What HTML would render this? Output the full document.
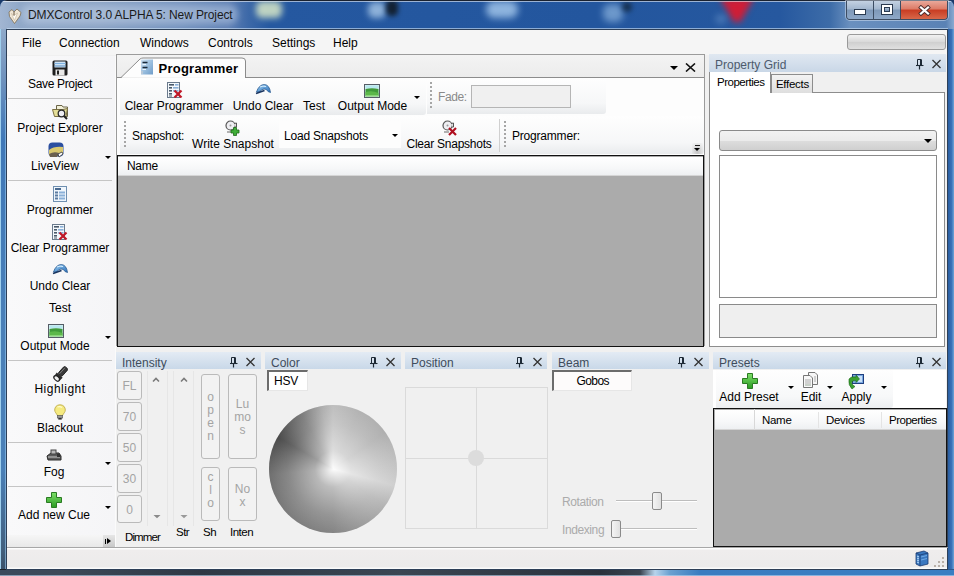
<!DOCTYPE html>
<html><head><meta charset="utf-8">
<style>
*{margin:0;padding:0;box-sizing:border-box}
html,body{width:954px;height:576px;overflow:hidden;background:#1a3a6a}
body{font-family:"Liberation Sans",sans-serif;font-size:12px;color:#000;position:relative}
.a{position:absolute}
.t{position:absolute;white-space:nowrap;line-height:14px}
.lb{text-align:center;letter-spacing:0px}
.sep{position:absolute;height:1px;background:#c5c5c5}
.dd{position:absolute;width:0;height:0;border-left:3px solid transparent;border-right:3px solid transparent;border-top:3px solid #000}
.hdr{position:absolute;height:17px;background:linear-gradient(#e3ebf4,#c9d8e8);}
.hdr .ht{position:absolute;left:6px;top:4px;font-size:12px;color:#3f4c5c;white-space:nowrap;line-height:14px}
.pin{position:absolute;top:4px;width:7px;height:10px}
.xx{position:absolute;top:3px;width:11px;height:11px}
.btnw{position:absolute;border:1px solid #bababa;border-radius:3px;background:#f2f2f2;color:#a4a4a4;font-size:12px;text-align:center}
</style></head><body>
<!-- window frame -->
<div class="a" style="left:0;top:0;width:954px;height:576px;background:#2a62a6;border-radius:7px 7px 0 0;overflow:hidden">
 <div class="a" style="left:0;top:0;width:954px;height:30px;background:linear-gradient(90deg,#a2b6d2 0px,#90a8c8 20px,#8aa2c4 100px,#7492be 180px,#5f80b4 228px,#3d69a8 248px,#2558a0 270px,#23569e 600px,#26589f 780px,#3d6ca8 830px,#6a90bf 850px,#5a82b5 946px,#8aaad0 954px)"></div>
 <div class="a" style="left:0;top:29px;width:7px;height:541px;background:linear-gradient(#8fa9c9 0,#6f92bd 50px,#3f78b8 110px,#4a80b8 300px,#4a80b8 440px,#42607e 520px,#3a5068 541px)"></div>
 <div class="a" style="left:5px;top:100px;width:1px;height:469px;background:rgba(150,200,240,.6)"></div>
 <div class="a" style="left:0;top:29px;width:1px;height:547px;background:#9fd0ee"></div>
 <div class="a" style="left:948px;top:29px;width:6px;height:547px;background:linear-gradient(90deg,#2a5ea0,#3a72b8 60%,#6fa6d8)"></div>
 <div class="a" style="left:0;top:569px;width:954px;height:7px;background:linear-gradient(90deg,#3a4a5c 0px,#3c4a58 60px,#2e3844 200px,#3a4652 400px,#2a323c 600px,#3a4450 640px,#b8d4ec 655px,#6aa0d0 670px,#3a7cc0 700px,#3a7ec2 954px)"></div>
 <div class="a" style="left:0;top:569px;width:954px;height:1px;background:linear-gradient(90deg,#1a2028 0,#1a2028 640px,#244a70 680px,#2a5a90 954px)"></div>
 <div class="a" style="left:0;top:575px;width:954px;height:1px;background:rgba(190,215,240,.6)"></div>
 <div class="a" style="left:256px;top:1px;width:26px;height:17px;border-radius:6px;background:#d8e8c8;filter:blur(3px);opacity:.85"></div>
 <div class="a" style="left:368px;top:2px;width:18px;height:16px;border-radius:6px;background:#a8c8e8;filter:blur(3px);opacity:.8"></div>
 <div class="a" style="left:386px;top:0px;width:12px;height:16px;border-radius:5px;background:#101820;filter:blur(2.5px);opacity:.85"></div>
 <div class="a" style="left:486px;top:1px;width:32px;height:17px;border-radius:8px;background:#a8cbee;filter:blur(3.5px);opacity:.8"></div>
 <div class="a" style="left:603px;top:4px;width:20px;height:18px;border-radius:7px;background:#8cb4de;filter:blur(3.5px);opacity:.7"></div>
 <div class="a" style="left:622px;top:2px;width:10px;height:10px;border-radius:5px;background:#102030;filter:blur(2.5px);opacity:.7"></div>
 <div class="a" style="left:715px;top:-4px;width:44px;height:34px;filter:blur(3px)"><div class="a" style="left:5px;top:2px;width:34px;height:24px;background:#d81a30;clip-path:polygon(0 0,100% 0,60% 100%,40% 100%);opacity:.95"></div></div>
 <div class="a" style="left:715px;top:14px;width:12px;height:10px;border-radius:5px;background:#5a86c0;filter:blur(3px);opacity:.6"></div>
 <div class="a" style="left:0;top:0;width:954px;height:1px;background:#1a2230"></div>
 <div class="a" style="left:1px;top:1px;width:952px;height:1px;background:rgba(255,255,255,.55)"></div>
 <div class="a" style="left:7px;top:28px;width:941px;height:1px;background:rgba(210,230,250,.6)"></div>
</div>
<!-- title glow -->
<div class="a" style="left:22px;top:5px;width:216px;height:19px;border-radius:8px;background:rgba(200,214,234,.45);filter:blur(3px)"></div>
<svg class="a" style="left:8px;top:8px" width="14" height="16" viewBox="0 0 14 16"><path d="M1 4 L4 1.5 L6 4 L9 1 L13 4.5 L12 8 L6.5 15.5 L1.5 8.5Z" fill="#efe6d6" stroke="#7c6c52" stroke-width=".8"/><path d="M3.5 5.5 L6 7.5 L9.5 5 L6.5 12.5Z" fill="#fffdf8" stroke="#b8a888" stroke-width=".5"/><path d="M6 4 L6 7.5" stroke="#5a4a38" stroke-width=".9"/></svg>
<div class="t" style="left:28px;top:8px;font-size:12px;color:#1a1a1a;letter-spacing:-0.1px">DMXControl 3.0 ALPHA 5: New Project</div>
<!-- caption buttons -->
<div class="a" style="left:845px;top:0px;width:104px;height:21px;border-radius:0 0 5px 5px;background:rgba(230,240,250,.45)"></div>
<div class="a" style="left:846px;top:1px;width:102px;height:19px;border:1px solid #3c4c62;border-top:none;border-radius:0 0 4px 4px;overflow:hidden;background:#5a7ba3">
  <div class="a" style="left:0;top:0;width:26px;height:18px;background:linear-gradient(#c4d2e2,#a2b6ce 45%,#7e98b8 50%,#8ea8c8)"></div>
  <div class="a" style="left:26px;top:0;width:1px;height:18px;background:#3c4c62"></div>
  <div class="a" style="left:27px;top:0;width:26px;height:18px;background:linear-gradient(#c4d2e2,#a2b6ce 45%,#7e98b8 50%,#8ea8c8)"></div>
  <div class="a" style="left:53px;top:0;width:1px;height:18px;background:#3c4c62"></div>
  <div class="a" style="left:54px;top:0;width:48px;height:18px;background:linear-gradient(#eaa89a,#dc7a66 45%,#c83c22 50%,#d8684a)"></div>
</div>
<div class="a" style="left:855px;top:10px;width:10px;height:4px;background:#fff;outline:1px solid #2a3a50"></div>
<div class="a" style="left:882px;top:5px;width:10px;height:9px;border:2px solid #fff;outline:1px solid #2a3a50;box-shadow:inset 0 0 0 1px #2a3a50"></div>
<svg class="a" style="left:918px;top:5px" width="13" height="11" viewBox="0 0 13 11"><path d="M3 2.5 L10 8.5 M10 2.5 L3 8.5" stroke="#4a2a2a" stroke-width="4" stroke-linecap="square"/><path d="M3 2.5 L10 8.5 M10 2.5 L3 8.5" stroke="#fff" stroke-width="2.3" stroke-linecap="square"/></svg>
<!-- client -->
<div class="a" style="left:6px;top:29px;width:942px;height:541px;border:1px solid #2e4058"></div>
<div class="a" id="client" style="left:7px;top:30px;width:940px;height:539px;background:#f0f0f0"></div>
<!-- menubar -->
<div class="a" style="left:7px;top:30px;width:940px;height:25px;background:#f5f5f5"></div>
<div class="t" style="left:22px;top:36px">File</div>
<div class="t" style="left:59px;top:36px">Connection</div>
<div class="t" style="left:140px;top:36px">Windows</div>
<div class="t" style="left:208px;top:36px">Controls</div>
<div class="t" style="left:272px;top:36px">Settings</div>
<div class="t" style="left:333px;top:36px">Help</div>
<div class="a" style="left:847px;top:34px;width:99px;height:16px;border:1px solid #9a9a9a;border-radius:3px;background:linear-gradient(#f2f2f2,#d8d8d8 50%,#cfcfcf 51%,#e0e0e0)"></div>
<!-- LEFT TOOLBAR -->
<div class="a" id="lt" style="left:7px;top:56px;width:108px;height:480px;background:linear-gradient(90deg,#f9f9fa,#f5f5f7)"></div><div class="a" style="left:115px;top:56px;width:1px;height:491px;background:#fbfbfb"></div>
<svg width="0" height="0" style="position:absolute">
<defs>
 <symbol id="i-save" viewBox="0 0 16 16"><rect x="0.5" y="0.5" width="15" height="15" rx="1.5" fill="#1e1e1e"/><rect x="2.5" y="1.5" width="11" height="6" fill="#cfe3f5"/><rect x="2.5" y="3" width="11" height="1" fill="#7fb2e0"/><rect x="2.5" y="5.5" width="11" height="1" fill="#5d8fc0"/><rect x="3.5" y="9.5" width="9" height="6" fill="#e8e8e8"/><rect x="5" y="10.5" width="2" height="4" fill="#222"/></symbol>
 <symbol id="i-explorer" viewBox="0 0 16 16"><path d="M4.5 1.5 H10 L11 3 H15.5 V12.5 H4.5Z" fill="#f2f0d8" stroke="#6a6448" stroke-width="1"/><path d="M0.5 5.5 H11 L15.5 4.5 L14 12.5 H2.5Z" fill="#e6df98" stroke="#7a7044" stroke-width="1"/><circle cx="9.5" cy="9.5" r="3.3" fill="#eeeef4" stroke="#2a2a2a" stroke-width="1.3"/><path d="M12 12 L15 15" stroke="#222" stroke-width="2"/></symbol>
 <symbol id="i-live" viewBox="0 0 16 16"><rect x="0.5" y="0.5" width="15" height="14" rx="4" fill="#2b4fa0"/><path d="M1 8 Q6 4 15 5 L15 12 Q8 10 1 13Z" fill="#d8c870"/><path d="M1 12 Q6 9 11 11 L9 15 L2 15Z" fill="#6a6050"/><path d="M10 12 L14 10 L15 12 L11 15Z" fill="#fff" stroke="#333" stroke-width=".8"/></symbol>
 <symbol id="i-prog" viewBox="0 0 16 16"><rect x="1.5" y="0.5" width="13" height="15" fill="#f0f6fc" stroke="#6f8fb0"/><rect x="3" y="2" width="6" height="2" fill="#4a6a90"/><rect x="3" y="5.5" width="3" height="2" fill="#5a7aa0"/><rect x="7" y="5.5" width="6" height="2" fill="#8ab0d8"/><rect x="3" y="8.5" width="3" height="2" fill="#5a7aa0"/><rect x="7" y="8.5" width="6" height="2" fill="#8ab0d8"/><rect x="3" y="11.5" width="3" height="2" fill="#5a7aa0"/><rect x="7" y="11.5" width="6" height="2" fill="#8ab0d8"/></symbol>
 <symbol id="i-clearprog" viewBox="0 0 16 16"><rect x="0.5" y="0.5" width="12" height="15" fill="#f4f8fc" stroke="#6a7a8c"/><rect x="2" y="2" width="5" height="1.6" fill="#4a5a6a"/><rect x="8" y="2" width="3.5" height="1.6" fill="#8ab0d8"/><rect x="2" y="5" width="3" height="1.6" fill="#4a5a6a"/><rect x="6" y="5" width="5.5" height="1.6" fill="#8ab0d8"/><rect x="2" y="8" width="3" height="1.6" fill="#4a5a6a"/><rect x="6" y="8" width="5.5" height="1.6" fill="#8ab0d8"/><rect x="2" y="11" width="3" height="1.6" fill="#4a5a6a"/><rect x="2" y="13.5" width="3" height="1" fill="#4a5a6a"/><path d="M7.5 8.5 L14.5 15.5 M14.5 8.5 L7.5 15.5" stroke="#c01828" stroke-width="2.2"/></symbol>
 <symbol id="i-undo" viewBox="0 0 16 16"><linearGradient id="ug" x1="0" y1="0" x2="1" y2="1"><stop offset="0" stop-color="#9ccff5"/><stop offset="1" stop-color="#2a6fb8"/></linearGradient><path d="M1.5 10 Q4 2.5 9.5 2.5 Q14.5 3 15.5 10.5 L13 9.5 Q11.5 6.5 9 7 Q6 7.5 4.5 10Z" fill="url(#ug)" stroke="#2a5a90" stroke-width=".8"/><path d="M1 11.5 L9.5 8.5" stroke="#1a3560" stroke-width="1.6"/><path d="M5 5 Q8 3.5 11 4.5" stroke="#d8f0ff" stroke-width="1" fill="none"/></symbol>
 <symbol id="i-output" viewBox="0 0 16 16"><rect x="0.5" y="2.5" width="15" height="13" fill="#d8f0f0" stroke="#555d66"/><rect x="1.5" y="3.5" width="13" height="3" fill="#b8e8f0"/><path d="M1.5 7 Q8 5.5 14.5 7 L14.5 14.5 L1.5 14.5Z" fill="#3f9a3a"/><path d="M1.5 10 Q8 8 14.5 11 L14.5 14 L1.5 14Z" fill="#5cb84a"/><rect x="1.5" y="13.5" width="13" height="1" fill="#b8f0a8"/></symbol>
 <symbol id="i-highlight" viewBox="0 0 16 16"><g transform="rotate(42 8 8)"><rect x="6" y="-1" width="5" height="10" rx="1.5" fill="#3a3a3a" stroke="#1a1a1a" stroke-width=".8"/><path d="M4.5 9 L12.5 9 L12 13 L5 13Z" fill="#2a2a2a"/><ellipse cx="8.5" cy="13.5" rx="4" ry="2.6" fill="#222"/><ellipse cx="8.5" cy="13.5" rx="2.6" ry="1.6" fill="#f0f0f0"/><path d="M7.5 0 L7.5 8" stroke="#8a8a8a" stroke-width=".8"/></g></symbol>
 <symbol id="i-bulb" viewBox="0 0 16 16"><path d="M8 0.8 C11.5 0.8 13.3 3.3 13.3 6 C13.3 8.3 11.3 9.5 10.6 11.5 L5.4 11.5 C4.7 9.5 2.7 8.3 2.7 6 C2.7 3.3 4.5 0.8 8 0.8Z" fill="#f5ea80" stroke="#bfae50" stroke-width=".9"/><path d="M5.5 3 Q8 2 10 3.5" stroke="#fffbd0" stroke-width="1.2" fill="none"/><rect x="5.3" y="11.5" width="5.4" height="2.5" fill="#9a9a9a" stroke="#555" stroke-width=".6"/><rect x="6.3" y="14" width="3.4" height="1.6" fill="#333"/></symbol>
 <symbol id="i-fog" viewBox="0 0 16 16"><path d="M1 8 L5 5 L13 5 L15 8 L15 12 L2 12Z" fill="#5a5a5a" stroke="#2a2a2a"/><rect x="5" y="2" width="5" height="4" fill="#b8b8b8" stroke="#444"/><path d="M2 9 L14 9" stroke="#c8c8c8"/><rect x="11" y="6" width="3" height="3" fill="#333"/></symbol>
 <symbol id="i-add" viewBox="0 0 16 16"><linearGradient id="ag" x1="0" y1="0" x2="0" y2="1"><stop offset="0" stop-color="#7ee06a"/><stop offset="1" stop-color="#2a9a22"/></linearGradient><path d="M5.5 0.5 H10.5 V5.5 H15.5 V10.5 H10.5 V15.5 H5.5 V10.5 H0.5 V5.5 H5.5Z" fill="url(#ag)" stroke="#2a7a22"/></symbol>
 <symbol id="i-pin" viewBox="0 0 8 11"><path d="M1.5 0.5 H5 V6.5 H1.5Z" fill="none" stroke="#1e2a36" stroke-width="1"/><path d="M5 0.5 V6.5" stroke="#1e2a36" stroke-width="2"/><path d="M0 6.5 H7.5" stroke="#1e2a36" stroke-width="1.1"/><path d="M3.5 7 V10.5" stroke="#1e2a36" stroke-width="1.2"/></symbol>
 <symbol id="i-x" viewBox="0 0 11 11"><path d="M1 1 L10 10 M10 1 L1 10" stroke="#222" stroke-width="1.5"/></symbol>
 <symbol id="i-snapadd" viewBox="0 0 16 16"><circle cx="6.5" cy="5.5" r="4.5" fill="#eeeef2" stroke="#555" stroke-width="1.2"/><circle cx="6.5" cy="5.5" r="1" fill="#999"/><path d="M10 3.5 L12.5 3 L12.5 7 L10.5 7" fill="#ddd" stroke="#555"/><path d="M3 12 L8 12" stroke="#999" stroke-width="1.5"/><path d="M9.5 7.5 H12.5 V10 H15 V13 H12.5 V15.5 H9.5 V13 H7 V10 H9.5Z" fill="#3fae38" stroke="#1e6a1a" stroke-width=".8"/></symbol>
 <symbol id="i-snapdel" viewBox="0 0 16 16"><circle cx="6.5" cy="5.5" r="4.5" fill="#eeeef2" stroke="#555" stroke-width="1.2"/><circle cx="6.5" cy="5.5" r="1" fill="#999"/><path d="M10 3.5 L12.5 3 L12.5 7 L10.5 7" fill="#ddd" stroke="#555"/><path d="M3 12 L8 12" stroke="#999" stroke-width="1.5"/><path d="M8 8 L15 15 M15 8 L8 15" stroke="#b01020" stroke-width="2.2"/></symbol>
 <symbol id="i-edit" viewBox="0 0 16 16"><path d="M5.5 0.5 H12 L14.5 3 V12.5 H5.5Z" fill="#f6f6f6" stroke="#777"/><path d="M0.5 3.5 H7 L9.5 6 V15.5 H0.5Z" fill="#f8f8f8" stroke="#777"/><path d="M2 8 H8 M2 10 H8 M2 12 H8 M11 5 H13 M11 7 H13 M11 9 H13" stroke="#aaa"/><rect x="2" y="12" width="6" height="2" fill="#c8d0c8"/></symbol>
 <symbol id="i-apply" viewBox="0 0 16 16"><rect x="4.5" y="0.5" width="11" height="9" fill="#7aa8e0" stroke="#1f3f80"/><rect x="10" y="2" width="4" height="6" fill="#c8e0f8"/><path d="M1 5 Q3 2 8 3 L8 1 L11.5 5 L8 8.5 L8 6.5 Q4 6 3.5 9 Q5 12 7 12.5 L4 15 Q0 11 1 5Z" fill="#3aa030" stroke="#1e6a1a" stroke-width=".6"/></symbol>
</defs></svg>
<!-- left toolbar items -->
<svg class="a" style="left:52px;top:60px" width="16" height="16"><use href="#i-save"/></svg>
<div class="t lb" style="left:0;width:120px;top:77px;letter-spacing:-0.35px">Save Project</div>
<div class="sep" style="left:8px;top:98px;width:104px"></div>
<svg class="a" style="left:52px;top:104px" width="16" height="16"><use href="#i-explorer"/></svg>
<div class="t lb" style="left:0;width:120px;top:121px">Project Explorer</div>
<svg class="a" style="left:48px;top:142px" width="16" height="16"><use href="#i-live"/></svg>
<div class="t lb" style="left:-5px;width:120px;top:159px">LiveView</div>
<div class="dd" style="left:105px;top:156px"></div>
<div class="sep" style="left:8px;top:180px;width:104px"></div>
<svg class="a" style="left:52px;top:186px" width="16" height="16"><use href="#i-prog"/></svg>
<div class="t lb" style="left:0;width:120px;top:203px">Programmer</div>
<svg class="a" style="left:52px;top:224px" width="16" height="16"><use href="#i-clearprog"/></svg>
<div class="t lb" style="left:0;width:120px;top:241px">Clear Programmer</div>
<svg class="a" style="left:52px;top:262px" width="16" height="16"><use href="#i-undo"/></svg>
<div class="t lb" style="left:0;width:120px;top:279px">Undo Clear</div>
<div class="t lb" style="left:0;width:120px;top:301px">Test</div>
<svg class="a" style="left:48px;top:322px" width="16" height="16"><use href="#i-output"/></svg>
<div class="t lb" style="left:-5px;width:120px;top:339px">Output Mode</div>
<div class="dd" style="left:105px;top:336px"></div>
<div class="sep" style="left:8px;top:360px;width:104px"></div>
<svg class="a" style="left:52px;top:366px" width="16" height="16"><use href="#i-highlight"/></svg>
<div class="t lb" style="left:0;width:120px;top:382px;letter-spacing:0.5px">Highlight</div>
<svg class="a" style="left:52px;top:404px" width="16" height="16"><use href="#i-bulb"/></svg>
<div class="t lb" style="left:0;width:120px;top:421px">Blackout</div>
<div class="sep" style="left:8px;top:442px;width:104px"></div>
<svg class="a" style="left:46px;top:448px" width="16" height="16"><use href="#i-fog"/></svg>
<div class="t lb" style="left:-6px;width:120px;top:465px">Fog</div>
<div class="dd" style="left:105px;top:462px"></div>
<div class="sep" style="left:8px;top:486px;width:104px"></div>
<svg class="a" style="left:46px;top:492px" width="16" height="16"><use href="#i-add"/></svg>
<div class="t lb" style="left:-6px;width:120px;top:508px">Add new Cue</div>
<div class="dd" style="left:105px;top:506px"></div>
<div class="a" style="left:8px;top:535px;width:107px;height:12px;background:linear-gradient(#f6f6f6,#e8e8e8)"></div>
<div class="a" style="left:103px;top:535px;width:12px;height:12px;background:linear-gradient(#e6e6e6,#c8c8c8)"></div>
<div class="a" style="left:105px;top:539px;width:1px;height:5px;background:#000"></div>
<div class="a" style="left:107px;top:538px;width:0;height:0;border-top:3px solid transparent;border-bottom:3px solid transparent;border-left:4px solid #000"></div>
<!-- DOC PANEL -->
<div class="a" style="left:116px;top:54px;width:589px;height:292px;background:#fdfdfd;border:1px solid #9b9b9b;border-bottom:none"></div>
<div class="a" style="left:117px;top:55px;width:587px;height:22px;background:linear-gradient(#f3f3f3,#ececec)"></div>
<div class="a" style="left:117px;top:77px;width:587px;height:1px;background:#8c8c8c"></div>
<svg class="a" style="left:116px;top:55px" width="140" height="24"><path d="M5 22.5 L24 4 Q25.5 3 27 3 L126 3 Q129.5 3 129.5 6 L129.5 23" fill="#fdfdfd" stroke="#8c8c8c"/><path d="M6 23 L129 23" stroke="#fdfdfd" stroke-width="1.5"/></svg>
<svg class="a" style="left:141px;top:59px" width="12" height="16" viewBox="0 0 12 16"><defs><linearGradient id="tg" x1="0" y1="0" x2="1" y2="1"><stop offset="0" stop-color="#cfe2f2"/><stop offset=".5" stop-color="#9cc0e0"/><stop offset="1" stop-color="#6f9cc8"/></linearGradient></defs><rect x="0" y="0.5" width="12" height="15" fill="url(#tg)"/><path d="M1.5 3.5 H6.5 M1.5 8.5 H6.5" stroke="#1a2a3a" stroke-width="1.3"/><path d="M1.5 5.5 H5 M1.5 10.5 H5" stroke="#e8f4ff" stroke-width="1"/><rect x="0" y="12" width="2" height="3" fill="#b8c8d8"/></svg>
<div class="t" style="left:158.5px;top:62px;font-weight:bold;font-size:13px;letter-spacing:0.25px">Programmer</div>
<div class="dd" style="left:670px;top:66px;border-left-width:4.5px;border-right-width:4.5px;border-top-width:4.5px"></div>
<svg class="a" style="left:685px;top:63px" width="11" height="9"><path d="M1 0.5 L10 8.5 M10 0.5 L1 8.5" stroke="#111" stroke-width="1.6"/></svg>
<!-- toolstrip 1 -->
<div class="a" style="left:120px;top:78px;width:306px;height:37px;background:linear-gradient(#fefefe,#f6f7f8 70%,#e9ebed);border-radius:0 0 3px 0"></div>
<div class="a" style="left:427px;top:78px;width:179px;height:36px;background:linear-gradient(#fefefe,#f6f7f8 70%,#e9ebed);border-radius:0 0 3px 0"></div>
<svg class="a" style="left:167px;top:82px" width="16" height="16"><use href="#i-clearprog"/></svg>
<div class="t lb" style="left:124px;width:100px;top:99px">Clear Programmer</div>
<svg class="a" style="left:255px;top:82px" width="16" height="16"><use href="#i-undo"/></svg>
<div class="t lb" style="left:232px;width:62px;top:99px">Undo Clear</div>
<div class="t lb" style="left:302px;width:24px;top:99px">Test</div>
<svg class="a" style="left:364px;top:82px" width="16" height="16"><use href="#i-output"/></svg>
<div class="t lb" style="left:335px;width:75px;top:99px">Output Mode</div>
<div class="dd" style="left:414px;top:96px"></div>
<div class="a" style="left:430px;top:82px;width:1px;height:26px;background:repeating-linear-gradient(#a6a6a6 0 2px,transparent 2px 4px);width:2px"></div>
<div class="t" style="left:438px;top:90px;color:#8a8a8a;letter-spacing:-0.4px">Fade:</div>
<div class="a" style="left:471px;top:85px;width:100px;height:23px;border:1px solid #b5b5b5;background:#f0f0f0"></div>
<!-- toolstrip 2 -->
<div class="a" style="left:120px;top:116px;width:584px;height:38px;background:linear-gradient(#fefefe,#f6f7f8 70%,#e9ebed);border-radius:0 0 3px 0"></div>
<div class="a" style="left:124px;top:121px;width:1px;height:27px;background:repeating-linear-gradient(#a6a6a6 0 2px,transparent 2px 4px);width:2px"></div>
<div class="t" style="left:132px;top:129px;letter-spacing:-0.2px">Snapshot:</div>
<svg class="a" style="left:224px;top:120px" width="16" height="16"><use href="#i-snapadd"/></svg>
<div class="t lb" style="left:192px;width:82px;top:137px">Write Snapshot</div>
<div class="a" style="left:279px;top:121px;width:122px;height:27px;background:#fdfdfd"></div>
<div class="t" style="left:284px;top:129px;letter-spacing:-0.2px">Load Snapshots</div>
<div class="dd" style="left:392px;top:134px"></div>
<svg class="a" style="left:441px;top:120px" width="16" height="16"><use href="#i-snapdel"/></svg>
<div class="t lb" style="left:406px;width:86px;top:137px;letter-spacing:-0.25px">Clear Snapshots</div>
<div class="a" style="left:499px;top:119px;width:1px;height:33px;background:#d0d0d0"></div>
<div class="a" style="left:504px;top:121px;width:1px;height:27px;background:repeating-linear-gradient(#a6a6a6 0 2px,transparent 2px 4px);width:2px"></div>
<div class="t" style="left:512px;top:129px;letter-spacing:-0.2px">Programmer:</div>
<div class="a" style="left:692px;top:143px;width:11px;height:11px;background:radial-gradient(ellipse at 50% 80%,#c4c4c4,rgba(220,220,220,.4) 70%,rgba(240,240,240,0))"></div>
<div class="a" style="left:695px;top:145px;width:5px;height:1px;background:#222"></div>
<div class="dd" style="left:694px;top:148px"></div>
<!-- grid -->
<div class="a" style="left:116.5px;top:155px;width:587.5px;height:191.5px;border:1.6px solid #111;background:#ababab"></div>
<div class="a" style="left:118px;top:156.5px;width:584.5px;height:19.5px;background:linear-gradient(#ffffff,#f7f8f9 60%,#eef0f2);border-bottom:1px solid #d5d5d5"></div>
<div class="t" style="left:127px;top:159px;font-size:12px;letter-spacing:-0.3px">Name</div>
<!-- PROPERTY GRID -->
<div class="a" style="left:709px;top:54px;width:237px;height:18px;background:linear-gradient(#e0e8f1,#c9d7e7)"></div>
<div class="t" style="left:715px;top:58px;color:#4d5b6d">Property Grid</div>
<svg class="a" style="left:916px;top:59px" width="8" height="11"><use href="#i-pin"/></svg>
<svg class="a" style="left:931px;top:59px" width="11" height="10"><path d="M1.5 1 L9.5 9 M9.5 1 L1.5 9" stroke="#333" stroke-width="1.3"/></svg>
<div class="a" style="left:709px;top:92px;width:236px;height:255px;background:#fff;border:1px solid #8d8d8d"></div>
<div class="a" style="left:709px;top:72px;width:62px;height:21px;background:#fff;border:1px solid #8d8d8d;border-bottom:none;border-top:none"></div>
<div class="t" style="left:717px;top:75px;font-size:11.5px;letter-spacing:-0.5px">Properties</div>
<div class="a" style="left:771px;top:74px;width:42px;height:19px;background:linear-gradient(#f3f3f3,#dedede);border:1px solid #8d8d8d;border-bottom:none"></div>
<div class="t" style="left:776px;top:77px;font-size:11.5px;letter-spacing:-0.3px">Effects</div>
<div class="a" style="left:719px;top:130px;width:218px;height:21px;border:1px solid #8a8a8a;border-radius:3px;background:linear-gradient(#f2f2f2,#ebebeb 50%,#dddddd 51%,#cfcfcf)"></div>
<div class="dd" style="left:924px;top:139px;border-left-width:4px;border-right-width:4px;border-top-width:4px"></div>
<div class="a" style="left:719px;top:155px;width:218px;height:143px;border:1px solid #8a8a8a;background:#fff"></div>
<div class="a" style="left:719px;top:304px;width:218px;height:34px;border:1px solid #8a8a8a;background:#efefef"></div>
<!-- BOTTOM PANELS -->
<div class="hdr" style="left:116px;top:352px;width:145px"><div class="ht">Intensity</div></div>
<svg class="a" style="left:230px;top:357px" width="8" height="11"><use href="#i-pin"/></svg>
<svg class="a" style="left:245px;top:357px" width="11" height="10"><path d="M1.5 1 L9.5 9 M9.5 1 L1.5 9" stroke="#333" stroke-width="1.3"/></svg>
<div class="hdr" style="left:265px;top:352px;width:136px"><div class="ht">Color</div></div>
<svg class="a" style="left:370px;top:357px" width="8" height="11"><use href="#i-pin"/></svg>
<svg class="a" style="left:385px;top:357px" width="11" height="10"><path d="M1.5 1 L9.5 9 M9.5 1 L1.5 9" stroke="#333" stroke-width="1.3"/></svg>
<div class="hdr" style="left:405px;top:352px;width:142px"><div class="ht">Position</div></div>
<svg class="a" style="left:516px;top:357px" width="8" height="11"><use href="#i-pin"/></svg>
<svg class="a" style="left:532px;top:357px" width="11" height="10"><path d="M1.5 1 L9.5 9 M9.5 1 L1.5 9" stroke="#333" stroke-width="1.3"/></svg>
<div class="hdr" style="left:552px;top:352px;width:157px"><div class="ht">Beam</div></div>
<svg class="a" style="left:678px;top:357px" width="8" height="11"><use href="#i-pin"/></svg>
<svg class="a" style="left:693px;top:357px" width="11" height="10"><path d="M1.5 1 L9.5 9 M9.5 1 L1.5 9" stroke="#333" stroke-width="1.3"/></svg>
<div class="hdr" style="left:713px;top:352px;width:233px"><div class="ht">Presets</div></div>
<svg class="a" style="left:916px;top:357px" width="8" height="11"><use href="#i-pin"/></svg>
<svg class="a" style="left:931px;top:357px" width="11" height="10"><path d="M1.5 1 L9.5 9 M9.5 1 L1.5 9" stroke="#333" stroke-width="1.3"/></svg>
<!-- intensity content -->
<div class="btnw" style="left:117px;top:371px;width:25px;height:29px;line-height:29px">FL</div>
<div class="btnw" style="left:117px;top:402px;width:25px;height:29px;line-height:29px">70</div>
<div class="btnw" style="left:117px;top:433px;width:25px;height:29px;line-height:29px">50</div>
<div class="btnw" style="left:117px;top:464px;width:25px;height:29px;line-height:29px">30</div>
<div class="btnw" style="left:117px;top:495px;width:25px;height:28px;line-height:28px">0</div>
<div class="a" style="left:147px;top:371px;width:21px;height:155px;border-left:1px solid #e6e6e6;border-right:1px solid #e6e6e6;background:#f0f0f0"></div>
<div class="a" style="left:173px;top:371px;width:21px;height:155px;border-left:1px solid #e6e6e6;border-right:1px solid #e6e6e6;background:#f0f0f0"></div>
<svg class="a" style="left:152px;top:377px" width="8" height="6"><path d="M1 4.5 L4 1.5 L7 4.5" fill="none" stroke="#7a7a7a" stroke-width="1.6"/></svg>
<svg class="a" style="left:180px;top:377px" width="8" height="6"><path d="M1 4.5 L4 1.5 L7 4.5" fill="none" stroke="#7a7a7a" stroke-width="1.6"/></svg>
<svg class="a" style="left:153px;top:514px" width="8" height="5"><path d="M0.5 1 L4 4.2 L7.5 1" fill="#8a8a8a"/></svg>
<svg class="a" style="left:180px;top:514px" width="8" height="5"><path d="M0.5 1 L4 4.2 L7.5 1" fill="#999"/></svg>
<div class="btnw" style="left:201px;top:374px;width:19px;height:85px;line-height:13px;padding-top:16px">o<br>p<br>e<br>n</div>
<div class="btnw" style="left:228px;top:374px;width:29px;height:85px;line-height:13px;padding-top:23px">Lu<br>mo<br>s</div>
<div class="btnw" style="left:201px;top:467px;width:19px;height:54px;line-height:13px;padding-top:3px">c<br>l<br>o</div>
<div class="btnw" style="left:228px;top:467px;width:29px;height:54px;line-height:13px;padding-top:15px">No<br>x</div>
<div class="t" style="left:125px;top:530px;font-size:11.5px;letter-spacing:-0.9px">Dimmer</div>
<div class="t" style="left:176px;top:525px;font-size:11.5px;letter-spacing:-0.5px">Str</div>
<div class="t" style="left:203px;top:525px;font-size:11.5px;letter-spacing:-0.5px">Sh</div>
<div class="t" style="left:230px;top:525px;font-size:11.5px;letter-spacing:-0.5px">Inten</div>
<!-- color content -->
<div class="a" style="left:267px;top:370px;width:41px;height:21px;background:#fff;border-left:2px solid #6c6c6c;border-top:2px solid #6c6c6c;border-right:1px solid #e6e6e6;border-bottom:1px solid #e6e6e6"></div>
<div class="t" style="left:274px;top:374px;font-size:12px;letter-spacing:-0.2px">HSV</div>
<div class="a" style="left:269px;top:405px;width:128px;height:128px;border-radius:50%;background:conic-gradient(from 0deg,#b4b4b4 0deg,#a6a6a6 25deg,#a2a2a2 55deg,#b8b8b8 85deg,#c8c8c8 105deg,#a8a8a8 125deg,#8e8e8e 150deg,#707070 180deg,#666666 225deg,#585858 265deg,#2c2c2c 300deg,#666666 330deg,#a0a0a0 350deg,#b4b4b4 360deg)"></div>
<div class="a" style="left:269px;top:405px;width:128px;height:128px;border-radius:50%;background:radial-gradient(circle at 50% 50%,rgba(255,255,255,.97) 0,rgba(255,255,255,.55) 20%,rgba(255,255,255,.28) 50%,rgba(255,255,255,.08) 80%,rgba(255,255,255,0) 100%)"></div>
<!-- position content -->
<div class="a" style="left:405px;top:387px;width:143px;height:142px;border:1px solid #dadada"></div>
<div class="a" style="left:476px;top:388px;width:1px;height:140px;background:#dadada"></div>
<div class="a" style="left:406px;top:458px;width:141px;height:1px;background:#dadada"></div>
<div class="a" style="left:468px;top:450px;width:16px;height:16px;border-radius:50%;background:#dcdcdc"></div>
<!-- beam content -->
<div class="a" style="left:552px;top:370px;width:80px;height:21px;background:#fdfbfb;border-left:2px solid #6c6c6c;border-top:2px solid #6c6c6c;border-right:1px solid #e6e6e6;border-bottom:1px solid #e6e6e6"></div>
<div class="t" style="left:576.5px;top:374px;font-size:12px;letter-spacing:-0.6px">Gobos</div>
<div class="t" style="left:562px;top:495px;color:#ababab;font-size:12px;letter-spacing:-0.4px">Rotation</div>
<div class="t" style="left:562px;top:523px;color:#ababab;font-size:12px;letter-spacing:-0.4px">Indexing</div>
<div class="a" style="left:616px;top:500px;width:81px;height:2px;border-top:1px solid #bdbdbd;border-bottom:1px solid #fff"></div>
<div class="a" style="left:616px;top:528px;width:81px;height:2px;border-top:1px solid #bdbdbd;border-bottom:1px solid #fff"></div>
<div class="a" style="left:652px;top:492px;width:10px;height:18px;border:1px solid #8a8a8a;border-radius:2px;background:linear-gradient(90deg,#f4f4f4,#e0e0e0)"></div>
<div class="a" style="left:611px;top:520px;width:10px;height:18px;border:1px solid #8a8a8a;border-radius:2px;background:linear-gradient(90deg,#f4f4f4,#e0e0e0)"></div>
<!-- presets content -->
<div class="a" style="left:713px;top:370px;width:233px;height:38px;background:#fff"></div>
<div class="a" style="left:716px;top:370px;width:177px;height:38px;background:linear-gradient(#fefefe,#f7f8f9 70%,#eceef0);border-radius:0 0 3px 0"></div>
<svg class="a" style="left:742px;top:373px" width="16" height="16"><use href="#i-add"/></svg>
<div class="t lb" style="left:718px;width:62px;top:390px">Add Preset</div>
<div class="dd" style="left:788px;top:386px"></div>
<svg class="a" style="left:803px;top:372px" width="16" height="16"><use href="#i-edit"/></svg>
<div class="t lb" style="left:798px;width:26px;top:390px">Edit</div>
<div class="dd" style="left:827px;top:386px"></div>
<svg class="a" style="left:848px;top:374px" width="16" height="16"><use href="#i-apply"/></svg>
<div class="t lb" style="left:838px;width:37px;top:390px">Apply</div>
<div class="dd" style="left:881px;top:386px"></div>
<div class="a" style="left:713px;top:408px;width:234px;height:139px;border:1.5px solid #111;background:#ababab"></div>
<div class="a" style="left:714.5px;top:409.5px;width:231px;height:20.5px;background:linear-gradient(#ffffff,#f7f8f9 60%,#eef0f2);border-bottom:1px solid #d5d5d5"></div>
<div class="a" style="left:754px;top:409px;width:1px;height:21px;background:#d8d8d8"></div>
<div class="a" style="left:818px;top:412px;width:1px;height:16px;background:#e4e4e4"></div>
<div class="a" style="left:881px;top:412px;width:1px;height:16px;background:#e4e4e4"></div>
<div class="t" style="left:762px;top:413px;font-size:11.5px;letter-spacing:-0.3px">Name</div>
<div class="t" style="left:826px;top:413px;font-size:11.5px;letter-spacing:-0.3px">Devices</div>
<div class="t" style="left:889px;top:413px;font-size:11.5px;letter-spacing:-0.5px">Properties</div>
<!-- status bar -->
<div class="a" style="left:7px;top:547px;width:941px;height:1px;background:#a7a7a7"></div>
<div class="a" style="left:7px;top:548px;width:940px;height:21px;background:linear-gradient(#fdfdfd 0,#fdfdfd 1px,#efeded 2px,#ecebeb 19px,#fbfbfb 20px)"></div>
<svg class="a" style="left:915px;top:550px" width="14" height="17" viewBox="0 0 14 17"><path d="M1 3 L9 1 L13 3 L13 14 L5 16 L1 14Z" fill="#3a78c0" stroke="#1a3a70" stroke-width=".8"/><path d="M1 3 L5 5 L13 3 M5 5 L5 16" stroke="#1a3a70" stroke-width=".8" fill="none"/><path d="M2 6 L4 7 M2 8 L4 9 M2 10 L4 11 M2 12 L4 13" stroke="#bfe0ff" stroke-width="1"/><path d="M6 7 L12 5.5 M6 10 L12 8.5" stroke="#7fb8f0" stroke-width=".8"/></svg>
<div class="a" style="left:942px;top:557px;width:2px;height:2px;background:#b8b0a8"></div>
<div class="a" style="left:938px;top:561px;width:2px;height:2px;background:#b8b0a8"></div>
<div class="a" style="left:942px;top:561px;width:2px;height:2px;background:#b8b0a8"></div>
<div class="a" style="left:934px;top:565px;width:2px;height:2px;background:#b8b0a8"></div>
<div class="a" style="left:938px;top:565px;width:2px;height:2px;background:#b8b0a8"></div>
<div class="a" style="left:942px;top:565px;width:2px;height:2px;background:#b8b0a8"></div>
